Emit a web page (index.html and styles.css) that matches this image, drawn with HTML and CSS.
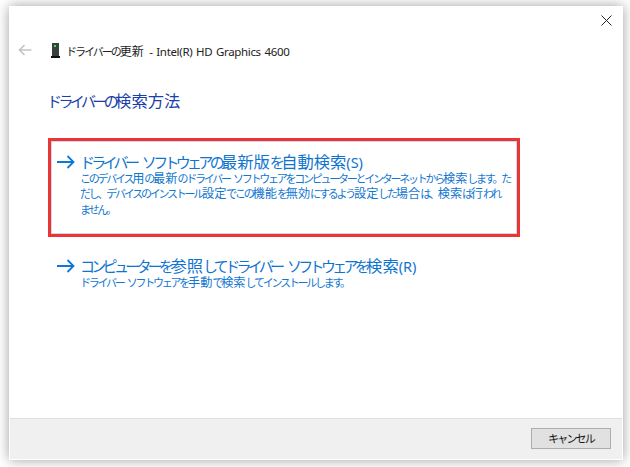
FILE: index.html
```html
<!DOCTYPE html>
<html lang="ja">
<head>
<meta charset="utf-8">
<title>ドライバーの更新</title>
<link rel="stylesheet" href="styles.css">
</head>
<body>
<div class="dialog">
  <div class="content">
    <div class="closebar">
      <svg class="close" width="11" height="11" viewBox="0 0 11 11"><path d="M.5.5l10 10M10.500.5l-10 10" stroke="#222" stroke-width="1" fill="none"/></svg>
    </div>
    <div class="nav">
      <svg class="back" width="14" height="12" viewBox="0 0 14 12"><path d="M13.500 6H1.500M6.500 1L1.500 6l5 5" stroke="#c4c4c4" stroke-width="1.600" fill="none"/></svg>
      <svg class="device" width="9" height="15" viewBox="0 0 9 15"><rect x="1" y="0" width="7" height="13" fill="#3a3f3f"/><rect x="3" y="2" width="2" height="2" fill="#3be63b"/><rect x="0" y="13" width="9" height="2" fill="#111"/></svg>
      <span class="navtitle">ドライバーの<span class="kj">更新</span> <span class="latin">- Intel(R) HD Graphics 4600</span></span>
    </div>
    <h1 class="heading">ドライバーの<span class="kj">検索方法</span></h1>
    <div class="highlight">
      <div class="option option-first">
        <svg class="arrow" width="18" height="14" viewBox="0 0 18 14"><path d="M0 7H16.500M10.500 1l6 6-6 6" stroke="#0a78d7" stroke-width="1.800" fill="none"/></svg>
        <div class="option-text">
          <div class="option-title">ドライバー ソフトウェアの<span class="kj">最新版</span>を<span class="kj">自動検索</span><span class="latin-t">(S)</span></div>
          <div class="option-desc">
            <span class="line">このデバイス<span class="kj">用</span>の<span class="kj">最新</span>のドライバー ソフトウェアをコンピューターとインターネットから<span class="kj">検索</span>します。た</span>
            <span class="line">だし、デバイスのインストール<span class="kj">設定</span>でこの<span class="kj">機能</span>を<span class="kj">無効</span>にするよう<span class="kj">設定</span>した<span class="kj">場合</span>は、<span class="kj">検索</span>は<span class="kj">行</span>われ</span>
            <span class="line">ません。</span>
          </div>
        </div>
      </div>
    </div>
    <div class="option option-second">
      <svg class="arrow" width="18" height="14" viewBox="0 0 18 14"><path d="M0 7H16.500M10.500 1l6 6-6 6" stroke="#0a78d7" stroke-width="1.800" fill="none"/></svg>
      <div class="option-text">
        <div class="option-title">コンピューターを<span class="kj">参照</span>してドライバー ソフトウェアを<span class="kj">検索</span><span class="latin-t">(R)</span></div>
        <div class="option-desc"><span class="line">ドライバー ソフトウェアを<span class="kj">手動</span>で<span class="kj">検索</span>してインストールします。</span></div>
      </div>
    </div>
  </div>
  <div class="footer">
    <button class="cancel">キャンセル</button>
  </div>
</div>
</body>
</html>
```
FILE: styles.css
```css
html, body {
  margin: 0;
  padding: 0;
  height: 467px;
  overflow: hidden;
  background: #fff;
}
body {
  padding: 6px 7px 7px 9px;
  box-sizing: border-box;
  font-family: "Noto Sans CJK JP", "Noto Sans", sans-serif;
}
.dialog {
  height: 454px;
  background: #fff;
  box-shadow: 0 0 12px rgba(0, 0, 0, .38);
  display: flex;
  flex-direction: column;
  padding: 0 1px 1px;
  box-sizing: border-box;
}
.content {
  flex: 1;
  padding: 0 0 0 38px;
}
.closebar {
  display: flex;
  justify-content: flex-end;
  height: 26px;
  padding: 9px 10px 0 0;
  box-sizing: border-box;
}
.nav {
  display: flex;
  align-items: center;
  height: 20px;
  margin-left: -30px;
  margin-top: 8px;
}
.back { margin-right: 19px; }
.device { margin-right: 6px; }
.navtitle {
  font-size: 11px;
  letter-spacing: -2px;
  color: #222;
  white-space: nowrap;
}
.navtitle .kj { font-size: 12px; letter-spacing: 0; }
.latin { font-family: "Noto Sans", sans-serif; font-size: 11.500px; letter-spacing: -.33px; margin-left: 5px; word-spacing: 1px; }
.heading {
  margin: 30px 0 0 -1px;
  font-size: 15px;
  line-height: 20px;
  font-weight: 400;
  color: #1a3fa8;
  letter-spacing: -3.600px;
  white-space: nowrap;
}
.heading .kj { font-size: 16.300px; letter-spacing: 0; }
.highlight {
  width: 472px;
  height: 99px;
  margin: 27px 0 0 0;
  box-sizing: border-box;
  border: 3px solid #ee3333;
  background: #fff;
  box-shadow: inset 0 0 0 1px #c4d8ee;
}
.option {
  display: flex;
  align-items: flex-start;
}
.option-first { padding: 10px 0 0 6px; }
.option-second { margin: 18px 0 0 9px; }
.arrow { margin-top: 4px; margin-right: 5px; flex: none; }
.option-title {
  font-size: 15px;
  line-height: 20px;
  color: #0f74cf;
  white-space: nowrap;
  letter-spacing: -3.700px;
  word-spacing: 6px;
}
.option-title .kj { font-size: 16.300px; letter-spacing: 0; }
.latin-t { font-family: "Noto Sans", sans-serif; font-size: 14.500px; letter-spacing: 0; }
.option-desc {
  font-size: 11px;
  line-height: 15.500px;
  color: #1177d0;
  letter-spacing: -2.250px;
  word-spacing: 3px;
  margin-top: -1.500px;
}
.option-desc .kj { font-size: 12.200px; letter-spacing: 0; }
.line {
  display: block;
  white-space: nowrap;
}
.footer {
  height: 41px;
  box-sizing: border-box;
  border-top: 1px solid #dedede;
  background: #f0f0f0;
  display: flex;
  justify-content: flex-end;
  align-items: flex-start;
  padding: 9px 11px 0 0;
}
.cancel {
  width: 80px;
  height: 21px;
  box-sizing: border-box;
  border: 1px solid #adadad;
  background: #e1e1e1;
  font: 11px/17px "Noto Sans CJK JP", sans-serif;
  color: #111;
  padding: 0;
  letter-spacing: -1.800px;
}
```
